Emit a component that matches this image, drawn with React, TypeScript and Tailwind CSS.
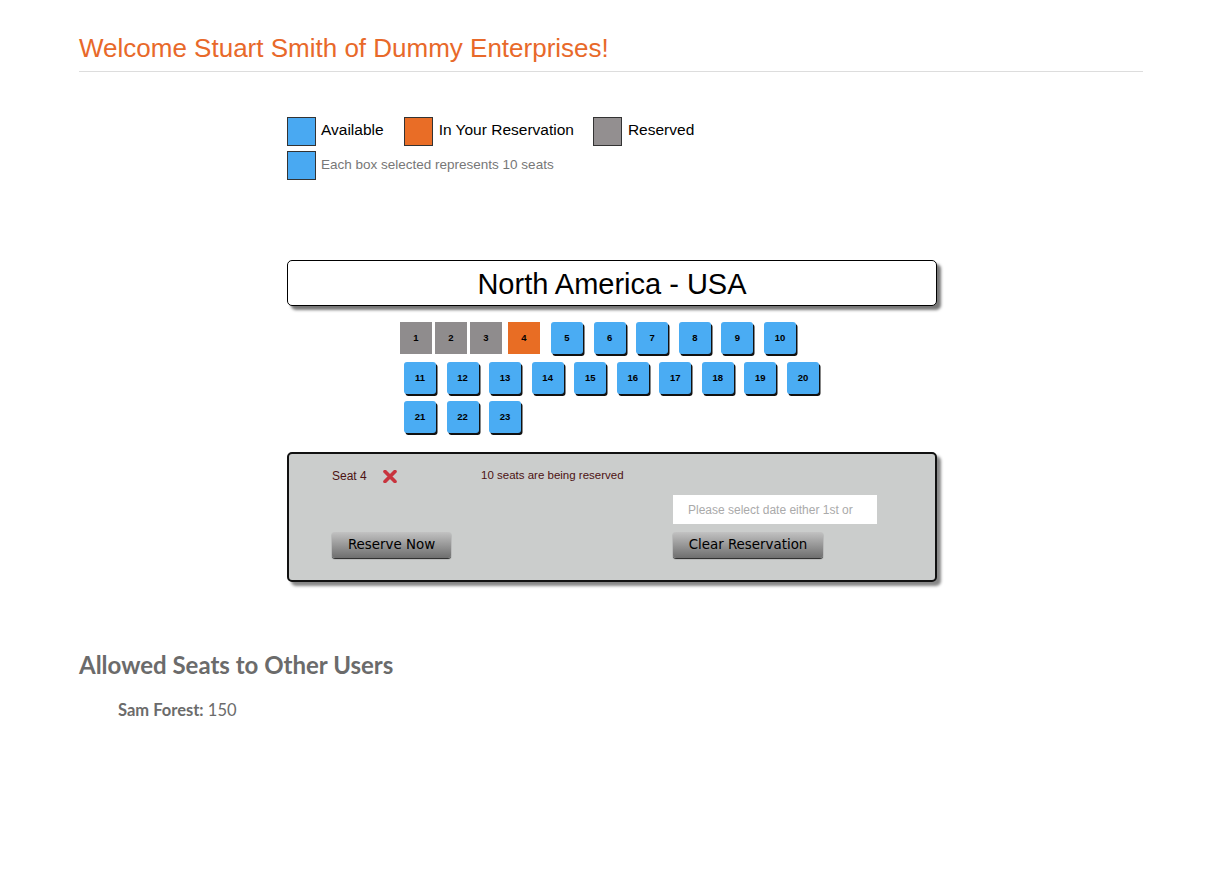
import React from "react";

const arial = { fontFamily: '"Liberation Sans", Arial, sans-serif' };

function Seat({ n, kind }: { n: number; kind: "gray" | "orange" | "blue" }) {
  const base =
    "w-[32px] h-[32px] flex items-center justify-center text-[9.5px] font-bold text-black shrink-0";
  if (kind === "gray") return <div className={`${base} bg-[#8f8c8d]`}>{n}</div>;
  if (kind === "orange") return <div className={`${base} bg-[#e86d24]`}>{n}</div>;
  return (
    <div className={`${base} bg-[#4aacf3] rounded-[3px] shadow-[1.5px_2px_0.5px_#111]`}>{n}</div>
  );
}

function XIcon() {
  return (
    <svg width="14" height="13" viewBox="0 0 14 13">
      <path d="M2 1.5 L12 11.5 M12 1.5 L2 11.5" stroke="#c8343e" strokeWidth="3.6" strokeLinecap="round" />
    </svg>
  );
}

export default function App() {
  return (
    <div className="min-h-[892px] bg-white" style={arial}>
      <div className="w-[1064px] ml-[79px]">
        <div className="pt-[33px] pb-[8px] border-b border-[#dddddd]">
          <h1 className="text-[26px] leading-[30px] text-[#e8692a] font-normal">
            Welcome Stuart Smith of Dummy Enterprises!
          </h1>
        </div>

        <div className="w-[650px] ml-[208px]">
          {/* Legend */}
          <div className="mt-[45px] flex items-center h-[29px]">
            <div className="w-[29px] h-[29px] bg-[#49a9f2] border border-[#333]" />
            <span className="ml-[5px] mb-[3px] text-[15.5px] leading-[18px] text-black">Available</span>
            <div className="ml-[20px] w-[29px] h-[29px] bg-[#e96d26] border border-[#333]" />
            <span className="ml-[6px] mb-[3px] text-[15.5px] leading-[18px] text-black">In Your Reservation</span>
            <div className="ml-[19px] w-[29px] h-[29px] bg-[#938f90] border border-[#333]" />
            <span className="ml-[6px] mb-[3px] text-[15.5px] leading-[18px] text-black">Reserved</span>
          </div>
          <div className="mt-[5px] flex items-center h-[29px]">
            <div className="w-[29px] h-[29px] bg-[#49a9f2] border border-[#333]" />
            <span className="ml-[5px] mb-[1px] text-[13.5px] leading-[16px] text-[#777]">Each box selected represents 10 seats</span>
          </div>

          {/* Region title */}
          <div className="mt-[80px] h-[46px] bg-white border border-black rounded-[5px] shadow-[4px_4px_3px_#777] flex items-center justify-center pt-[3px]">
            <span className="text-[29px] text-black leading-none">North America - USA</span>
          </div>

          {/* Seats */}
          <div className="mt-[16px] flex ml-[113px]">
            <Seat n={1} kind="gray" />
            <div className="ml-[3px]"><Seat n={2} kind="gray" /></div>
            <div className="ml-[3px]"><Seat n={3} kind="gray" /></div>
            <div className="ml-[6px]"><Seat n={4} kind="orange" /></div>
            <div className="ml-[11px] flex gap-x-[10.6px]">
              {[5, 6, 7, 8, 9, 10].map((n) => (
                <Seat key={n} n={n} kind="blue" />
              ))}
            </div>
          </div>
          <div className="mt-[8px] flex ml-[117px] gap-x-[10.55px]">
            {[11, 12, 13, 14, 15, 16, 17, 18, 19, 20].map((n) => (
              <Seat key={n} n={n} kind="blue" />
            ))}
          </div>
          <div className="mt-[7px] flex ml-[117px] gap-x-[10.55px]">
            {[21, 22, 23].map((n) => (
              <Seat key={n} n={n} kind="blue" />
            ))}
          </div>

          {/* Panel */}
          <div className="mt-[19px] h-[130px] bg-[#cbcdcc] border-2 border-[#111] rounded-[5px] shadow-[4px_4px_3px_#888] pl-[43px] pt-[14px]">
            <div className="flex items-center h-[16px] text-[12px] text-[#4d1212]">
              <div className="w-[149px] flex items-center">
                <span>Seat 4</span>
                <span className="ml-[16px] flex items-center"><XIcon /></span>
              </div>
              <span className="text-[11.5px]">10 seats are being reserved</span>
            </div>
            <div className="mt-[11px] ml-[341px] w-[204px] h-[29px] bg-white flex items-center pl-[15px] text-[12px] text-[#aaa]">
              Please select date either 1st or
            </div>
            <div className="mt-[8px] flex">
              <button
                className="w-[119px] h-[26px] rounded-[3px] bg-gradient-to-b from-[#c2c2c2] to-[#6f6f6f] shadow-[0_1px_1px_#222] text-black text-[13.4px] flex items-center justify-center"
                style={{ fontFamily: '"DejaVu Sans", Verdana, sans-serif' }}
              >
                Reserve Now
              </button>
              <button
                className="ml-[222px] w-[150px] h-[26px] rounded-[3px] bg-gradient-to-b from-[#c2c2c2] to-[#6f6f6f] shadow-[0_1px_1px_#222] text-black text-[13.4px] flex items-center justify-center"
                style={{ fontFamily: '"DejaVu Sans", Verdana, sans-serif' }}
              >
                Clear Reservation
              </button>
            </div>
          </div>
        </div>

        {/* Other users */}
        <div className="mt-[68px]" style={{ fontFamily: 'Lato, "Open Sans", sans-serif' }}>
          <h2 className="text-[24px] leading-[30px] font-bold text-[#6b6b6b]">Allowed Seats to Other Users</h2>
          <div className="mt-[20px] ml-[39px] text-[16.5px] leading-[20px] text-[#6b6b6b]">
            <span className="font-bold">Sam Forest:</span> 150
          </div>
        </div>
      </div>
    </div>
  );
}
